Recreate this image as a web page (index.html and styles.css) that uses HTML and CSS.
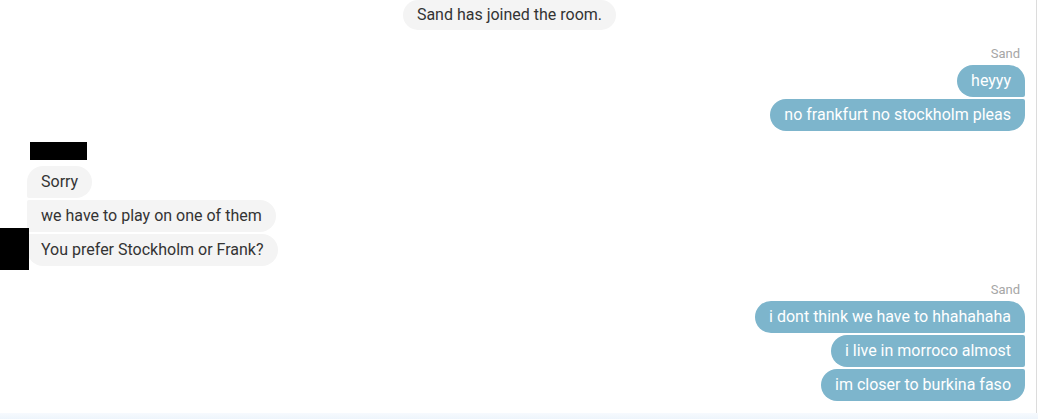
FILE: index.html
```html
<!DOCTYPE html>
<html lang="en">
<head>
    <meta charset="UTF-8">
    <meta name="viewport" content="width=device-width, initial-scale=1.0">
    <title>Room chat</title>
    <link rel="stylesheet" href="styles.css">
</head>
<body>

    <!-- Lista de mensagens -->
    <div class="chat">
        <div class="system-row">
            <span class="system-msg">Sand has joined the room.</span>
        </div>

        <div class="group mine">
            <div class="sender">Sand</div>
            <div class="bubble first">heyyy</div>
            <div class="bubble last">no frankfurt no stockholm pleas</div>
        </div>

        <div class="group theirs">
            <div class="sender-hidden"></div>
            <div class="bubble first">Sorry</div>
            <div class="bubble">we have to play on one of them</div>
            <div class="bubble last">You prefer Stockholm or Frank?</div>
            <div class="avatar-hidden"></div>
        </div>

        <div class="group mine">
            <div class="sender">Sand</div>
            <div class="bubble first">i dont think we have to hhahahaha</div>
            <div class="bubble">i live in morroco almost</div>
            <div class="bubble last">im closer to burkina faso</div>
        </div>
    </div>

    <div class="composer"></div>

</body>
</html>
```

FILE: styles.css
```css
body {
    margin: 0;
    font-family: Roboto, "Liberation Sans", sans-serif;
    font-size: 16px;
    background-color: #fff;
    color: #333;
}
.chat {
    width: 1037px;
    height: 413px;
    box-sizing: border-box;
    border-right: 1px solid #dcdcdc;
    padding: 0 11px 0 27px;
    overflow: hidden;
}
.system-row {
    display: flex;
    justify-content: center;
    margin: 0 -11px 0 -27px;
    padding-right: 17px;
}
.system-msg {
    display: inline-block;
    height: 30px;
    line-height: 30px;
    padding: 0 14px;
    border-radius: 15px;
    background-color: #f4f4f4;
    color: #333;
}
.group {
    display: flex;
    flex-direction: column;
    gap: 2px;
    position: relative;
}
.group.mine {
    align-items: flex-end;
    margin-top: 16px;
}
.group.theirs {
    align-items: flex-start;
    margin-top: 11px;
}
.sender {
    font-size: 13px;
    line-height: 16px;
    color: #a6a6a6;
    padding-right: 5px;
    margin-bottom: 1px;
}
.sender-hidden {
    width: 57px;
    height: 18px;
    margin-left: 3px;
    margin-bottom: 4px;
    background-color: #000;
}
.bubble {
    line-height: 20px;
    padding: 6px 14px;
    border-radius: 16px;
}
.mine .bubble {
    background-color: #7db5cc; /* azul do remetente */
    color: #fff;
    border-top-right-radius: 2px;
    border-bottom-right-radius: 2px;
}
.mine .bubble.first {
    border-top-right-radius: 16px;
}
.mine .bubble.last {
    border-bottom-right-radius: 16px;
}
.theirs .bubble {
    background-color: #f4f4f4;
    color: #333;
    border-top-left-radius: 2px;
    border-bottom-left-radius: 2px;
}
.theirs .bubble.first {
    border-top-left-radius: 16px;
}
.theirs .bubble.last {
    border-bottom-left-radius: 16px;
}
.avatar-hidden {
    position: absolute;
    left: -27px;
    bottom: -4px;
    width: 29px;
    height: 42px;
    background-color: #000;
}
.composer {
    height: 6px;
    background: linear-gradient(to bottom, #f7fafe, #eef5fc);
}
```
